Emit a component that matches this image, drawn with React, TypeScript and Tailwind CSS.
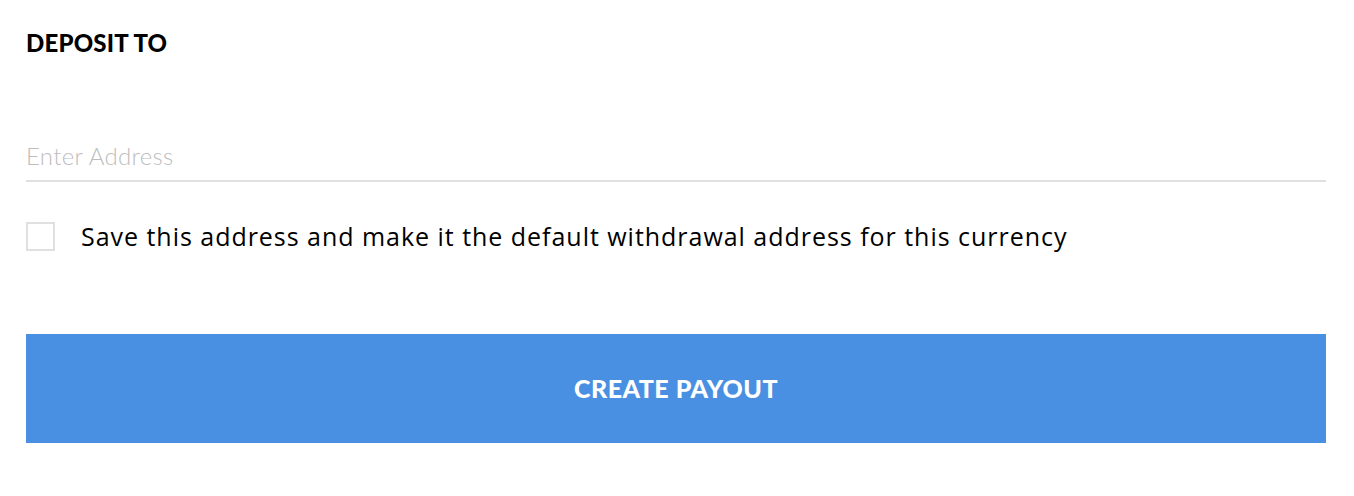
import React from "react";

export default function App() {
  return (
    <div className="w-[1354px] h-[496px] bg-white pl-[26px] pr-[28px] pt-[28px]">
      <h2 className="font-['Lato',sans-serif] font-black text-[24px] leading-[30px] tracking-[0.2px] text-black">DEPOSIT TO</h2>
      <div className="mt-[84px] border-b-2 border-[#e0e0e0] pb-[9px]">
        <input
          className="w-full outline-none font-['Lato',sans-serif] font-light text-[24px] leading-[28px] tracking-[0.3px] text-black placeholder:text-[#bdbdbd]"
          placeholder="Enter Address"
        />
      </div>
      <label className="mt-[38px] flex items-center gap-[26px]">
        <span className="w-[29px] h-[29px] border-2 border-[#e0e0e0] bg-white" />
        <span className="font-['Open_Sans',sans-serif] text-[25px] leading-[32px] tracking-[0.97px] text-black">
          Save this address and make it the default withdrawal address for this currency
        </span>
      </label>
      <button className="mt-[82px] w-full h-[109px] bg-[#4a90e2] text-white font-['Lato',sans-serif] font-black text-[25px] tracking-[0.5px]">
        CREATE PAYOUT
      </button>
    </div>
  );
}
